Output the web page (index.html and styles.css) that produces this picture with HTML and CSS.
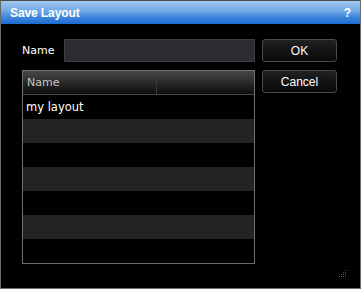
FILE: index.html
```html
<!DOCTYPE html>
<html>
<head>
<meta charset="utf-8">
<link rel="stylesheet" href="styles.css">
</head>
<body>
<div class="window">
  <div class="titlebar">
    <span class="title">Save Layout</span>
    <span class="help">?</span>
  </div>
  <div class="main">
    <div class="left">
      <div class="name-row">
        <span class="label">Name</span>
        <div class="input"></div>
      </div>
      <div class="list">
        <div class="header">
          <div class="col col-name">Name</div>
          <div class="col col-rest"></div>
        </div>
        <div class="row">my layout</div>
        <div class="row alt"></div>
        <div class="row"></div>
        <div class="row alt"></div>
        <div class="row"></div>
        <div class="row alt"></div>
        <div class="row"></div>
      </div>
    </div>
    <div class="right">
      <div class="btn">OK</div>
      <div class="btn">Cancel</div>
    </div>
  </div>
  <svg class="grip" width="8" height="8" viewBox="0 0 8 8">
    <rect x="6" y="0" width="1" height="1" fill="#555"/>
    <rect x="4" y="2" width="1" height="1" fill="#555"/>
    <rect x="6" y="2" width="1" height="1" fill="#555"/>
    <rect x="2" y="4" width="1" height="1" fill="#555"/>
    <rect x="4" y="4" width="1" height="1" fill="#555"/>
    <rect x="6" y="4" width="1" height="1" fill="#555"/>
    <rect x="0" y="6" width="1" height="1" fill="#555"/>
    <rect x="2" y="6" width="1" height="1" fill="#555"/>
    <rect x="4" y="6" width="1" height="1" fill="#555"/>
    <rect x="6" y="6" width="1" height="1" fill="#555"/>
  </svg>
</div>
</body>
</html>
```
FILE: styles.css
```css
* { box-sizing: border-box; }
html, body { margin: 0; padding: 0; background: #000; }
.window {
  position: relative;
  width: 361px;
  height: 289px;
  border: 1px solid #6a6a6a;
  border-top-color: #4a4a4a;
  background: #000;
  font-family: "DejaVu Sans", Verdana, sans-serif;
  overflow: hidden;
}
.titlebar {
  height: 23px;
  display: flex;
  align-items: center;
  justify-content: space-between;
  padding: 0 9px 0 9px;
  background: linear-gradient(to bottom, #a2c8ee 0%, #6ea6e4 45%, #3f86dc 70%, #1c6bd2 100%);
  color: #fff;
  font-family: "Liberation Sans", Arial, sans-serif;
  font-weight: bold;
  font-size: 12px;
}
.title { letter-spacing: -0.1px; }
.help { font-size: 12px; }
.main {
  display: flex;
  gap: 7px;
  padding: 15px 0 0 21px;
}
.left { width: 233px; }
.name-row {
  display: flex;
  align-items: center;
  height: 23px;
}
.label {
  width: 33px;
  white-space: nowrap;
  margin-right: 9px;
  color: #fff;
  font-size: 11px;
}
.input {
  width: 191px;
  height: 23px;
  background: #2b2b30;
  border: 1px solid #3d3d42;
}
.list {
  margin-top: 8px;
  width: 233px;
  height: 194px;
  border: 1px solid #707070;
  border-bottom-color: #6a6a6a;
}
.header {
  display: flex;
  height: 24px;
  border-bottom: 1px solid #4a4a4a;
  background: linear-gradient(to bottom, #474747 0%, #2a2a2a 50%, #0c0c0c 100%);
}
.col {
  height: 23px;
  display: flex;
  align-items: center;
  font-size: 11px;
  color: #c4c4c4;
}
.col-name {
  width: 134px;
  padding-left: 4px;
  border-right: 1px solid #3a3a3a;
}
.col-rest { flex: 1; }
.row {
  height: 24px;
  display: flex;
  align-items: center;
  padding-left: 3px;
  color: #fff;
  font-size: 11.5px;
}
.row.alt { background: #232323; }
.right {
  display: flex;
  flex-direction: column;
  gap: 8px;
}
.btn {
  width: 75px;
  height: 23px;
  border: 1px solid #4a4a4a;
  border-radius: 3px;
  background: linear-gradient(to bottom, #222 0%, #111 60%, #0a0a0a 100%);
  color: #fff;
  font-family: "Liberation Sans", Arial, sans-serif;
  font-size: 12px;
  display: flex;
  align-items: center;
  justify-content: center;
}
.grip {
  position: absolute;
  right: 13px;
  bottom: 10px;
}
```
